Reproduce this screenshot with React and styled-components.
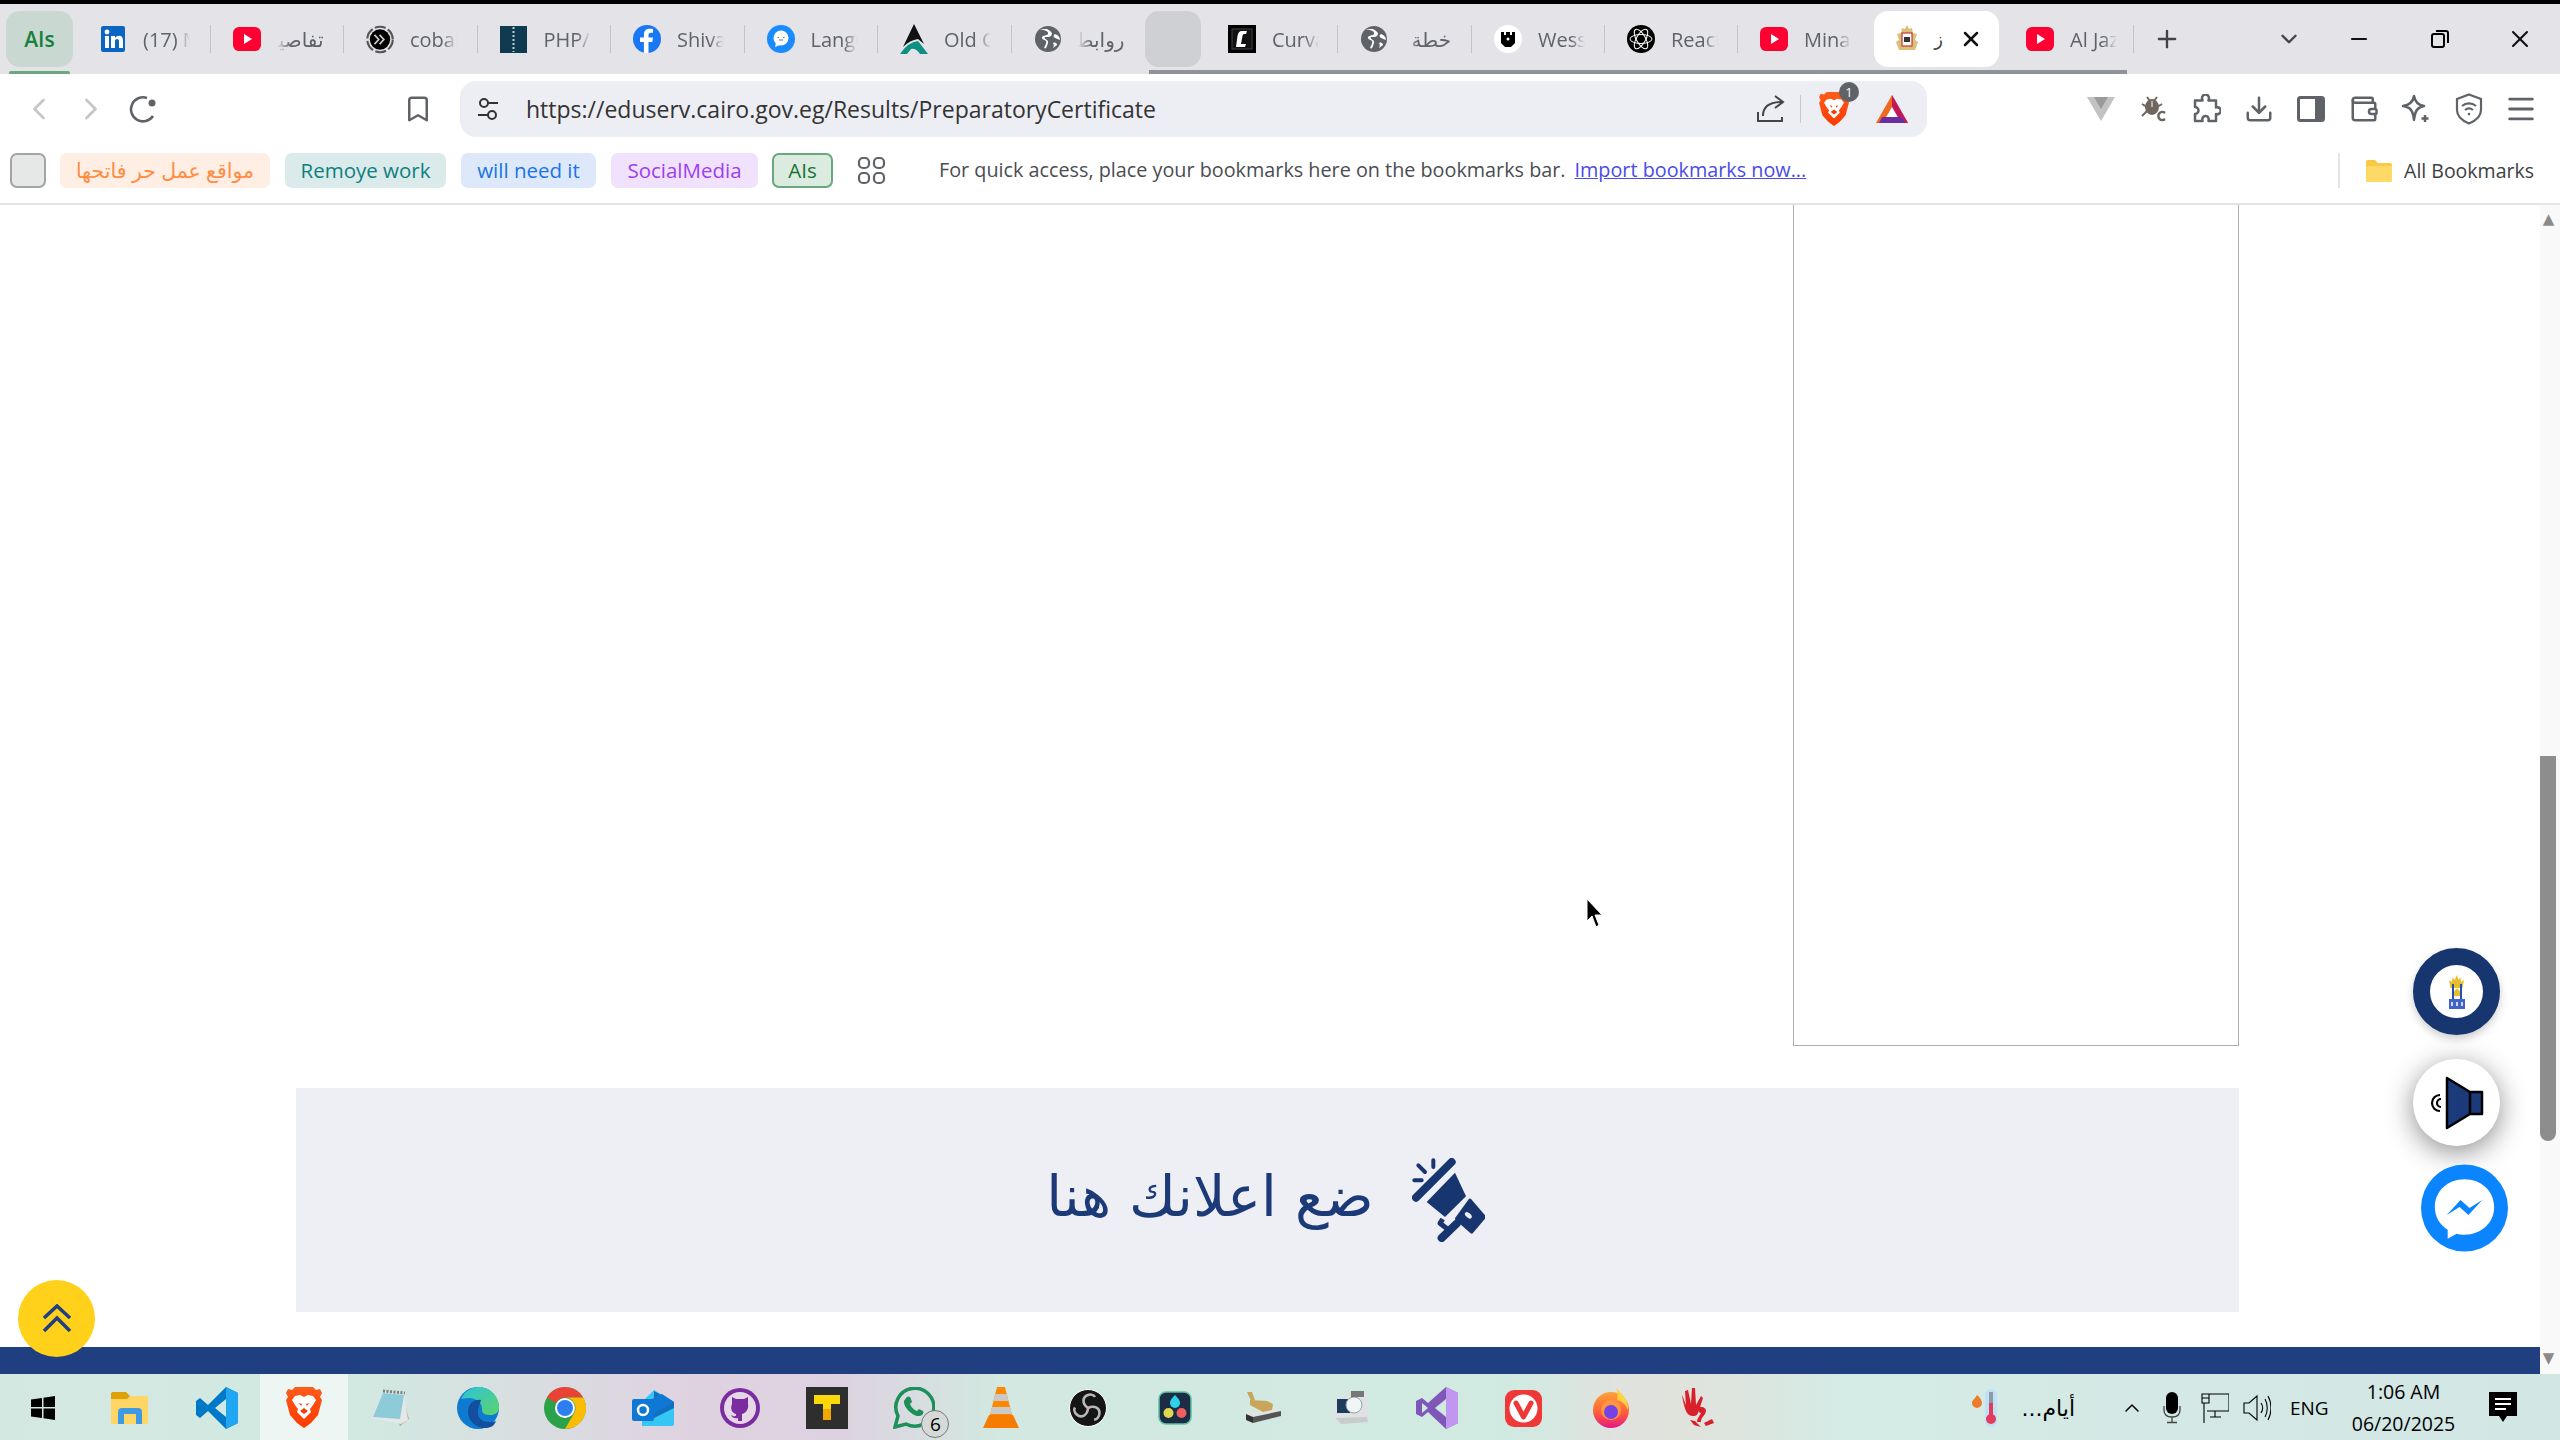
import React from 'react'
import styled, { createGlobalStyle } from 'styled-components'
import {
    ChevronLeft, ChevronRight, Bookmark, Download,
    Wallet, Plus, X, Minus, ChevronDown, ChevronUp, Menu
} from 'lucide-react'

const GlobalStyle = createGlobalStyle`
    html, body { margin: 0; padding: 0; background: #fff; }
    body { font-family: "Open Sans", "DejaVu Sans", sans-serif; }
`

// ---------- small drawn icons ----------

const YouTube = ({ size = 28 }) => (
    <svg width={size} height={size * 0.86} viewBox="0 0 28 24">
        <rect x="0" y="0" width="28" height="24" rx="6" fill="#ff0033" />
        <path d="M11 7 L19 12 L11 17 Z" fill="#fff" />
    </svg>
)

const LinkedIn = () => (
    <svg width="24" height="26" viewBox="0 0 24 26">
        <rect width="24" height="26" rx="2" fill="#0a66c2" />
        <circle cx="6" cy="6" r="2.4" fill="#fff" />
        <path d="M4 10h4v12H4zM10 10h4v2c1-1.5 2.5-2.3 4-2.3 3 0 4 2 4 5V22h-4v-6.5c0-1.500-.5-2.500-2-2.500s-2 1-2 2.500V22h-4z" fill="#fff" />
    </svg>
)

const Cobalt = () => (
    <svg width="33" height="33" viewBox="0 0 33 33">
        <circle cx="16.5" cy="16.5" r="15" fill="none" stroke="#555" strokeWidth="2.5" strokeDasharray="13 3" />
        <circle cx="16.5" cy="16.5" r="12" fill="#000" />
        <path d="M10 11l5 5.5-5 5.5M16 11l5 5.5-5 5.5" fill="none" stroke="#ccc" strokeWidth="2" />
    </svg>
)

const PhpIcon = () => (
    <svg width="27" height="27" viewBox="0 0 27 27">
        <rect width="27" height="27" fill="#0f3a50" />
        <path d="M13.5 1V26" stroke="#b8d0dc" strokeWidth="2" strokeDasharray="2 2" />
    </svg>
)

const Facebook = () => (
    <svg width="28" height="28" viewBox="0 0 28 28">
        <circle cx="14" cy="14" r="14" fill="#1877f2" />
        <path d="M15.5 28V17h3.800l.7-4.400h-4.500V10c0-1.300.6-2.300 2.400-2.300H20V4c-.7-.1-2-.3-3.400-.3-3.400 0-5.700 2.100-5.700 5.800v3.100H7V17h3.900v11z" fill="#fff" />
    </svg>
)

const Lang = () => (
    <svg width="28" height="28" viewBox="0 0 28 28">
        <circle cx="14" cy="14" r="14" fill="#1a8cff" />
        <circle cx="14" cy="13" r="7.5" fill="#fff" />
        <path d="M9 18l-1 4 5-2z" fill="#fff" />
        <path d="M10.5 12.5h1.500M16 12.5h1.500M12 15h4" stroke="#777" strokeWidth="1.2" />
    </svg>
)

const OldIcon = () => (
    <svg width="30" height="32" viewBox="0 0 28 30">
        <path d="M14 0 L24 20 L18 15 Q10 16 3 23Z" fill="#111" />
        <path d="M0 30 Q8 18 18 17 L28 30 L20 30 Q16 24 11 25 L7 30Z" fill="#0f8f83" />
    </svg>
)

const GlobeTab = () => (
    <svg width="26" height="26" viewBox="0 0 26 26">
        <circle cx="13" cy="13" r="13" fill="#5f6368" />
        <path d="M5 3c4 1 9 2 8 5-1 2-5 1-6 3s3 3 4 4-1 5-2 7c2 1 2 0 3-2 1-3 2-4 0-6-2-1-3-2-2-3 2 0 6 1 7-3 0-2-3-4-5-5z" fill="#fff" />
        <path d="M20 8c-2 1-2 3 0 4l5 2c0-3-2-5-5-6zM18 17c1 1 1 3 0 5l4-3c0-2-2-3-4-2z" fill="#fff" />
    </svg>
)

const Curva = () => (
    <svg width="28" height="28" viewBox="0 0 28 28">
        <rect width="28" height="28" fill="#000" />
        <rect x="4" y="4" width="20" height="20" fill="#111" stroke="#444" />
        <path d="M19 6h-5c-3 0-4 2-4.500 5L8 22h9l1-3h-5l1.500-8c.2-1 .5-2 1.500-2h2z" fill="#fff" />
    </svg>
)

const Wess = () => (
    <svg width="28" height="28" viewBox="0 0 28 28">
        <circle cx="14" cy="14" r="14" fill="#fff" />
        <path d="M7 7h3v3h2V7h4v3h2V7h3v11l-4 4h-6l-4-4z" fill="#000" />
        <circle cx="14" cy="14" r="1.5" fill="#fff" />
    </svg>
)

const ReactLogo = () => (
    <svg width="28" height="28" viewBox="0 0 28 28">
        <circle cx="14" cy="14" r="14" fill="#000" />
        <g fill="none" stroke="#fff" strokeWidth="1">
            <ellipse cx="14" cy="14" rx="11" ry="4.5" />
            <ellipse cx="14" cy="14" rx="11" ry="4.5" transform="rotate(60 14 14)" />
            <ellipse cx="14" cy="14" rx="11" ry="4.5" transform="rotate(120 14 14)" />
        </g>
    </svg>
)

const EagleSmall = () => (
    <svg width="22" height="30" viewBox="0 0 22 28">
        <path d="M11 0l2 4 3-1 1 5 4 1-2 6 3 2-3 8H3l-3-8 3-2-2-6 4-1 1-5 3 1z" fill="#dcc07a" />
        <rect x="6" y="8" width="10" height="13" fill="#fff" stroke="#c33" strokeWidth="1.2" />
        <rect x="8" y="12" width="6" height="5" fill="#333" />
    </svg>
)

const BraveLion = ({ w = 30, h = 34, id = 'brv' }) => (
    <svg width={w} height={h} viewBox="0 0 36 41">
        <defs>
            <linearGradient id={id} x1="0" y1="0" x2="0" y2="1">
                <stop offset="0" stopColor="#ff5c1a" />
                <stop offset="1" stopColor="#fb3a00" />
            </linearGradient>
        </defs>
        <path d="M9 0h18l3 3 4-1 2 4-2 4 2 3-4 15-7 8-7 5-7-5-7-8L0 13l2-3-2-4 2-4 4 1z" fill={`url(#${id})`} />
        <path d="M9 9l5-1 4 2 4-2 5 1 3 4-3 5-3 4 1 3-7 7-7-7 1-3-3-4-3-5z" fill="#fff" />
        <path d="M13 16l3 1-1 2zM23 16l-3 1 1 2zM18 21l-4 3 4 3 4-3z" fill="#fb3a00" />
    </svg>
)

const Aurora = () => (
    <svg width="32" height="28" viewBox="0 0 32 28">
        <path d="M16 0 L32 28 H0Z" fill="#ef6a1f" />
        <path d="M16 0 L32 28 H24 L16 12Z" fill="#c2185b" />
        <path d="M16 12 L23 24 H9Z" fill="#fff" />
        <path d="M6 22 H26 L29 28 H3Z" fill="#6a2ea0" />
    </svg>
)

const SiteControls = () => (
    <svg width="20" height="24" viewBox="0 0 20 24" fill="none" stroke="#333" strokeWidth="2">
        <circle cx="6" cy="6" r="4" />
        <path d="M10 6h10M0 18h10" />
        <circle cx="14" cy="18" r="4" />
    </svg>
)

const ShareArrow = () => (
    <svg width="28" height="28" viewBox="0 0 28 28" fill="none" stroke="#444" strokeWidth="2">
        <path d="M1 17v9h24v-4" />
        <path d="M6 21c0-9 6-14 19-14" />
        <path d="M18 1l8 6-8 6" />
    </svg>
)

const Reload = () => (
    <svg width="28" height="28" viewBox="0 0 28 28" fill="none">
        <path d="M24 21A12 12 0 1 1 18 3" stroke="#5f6368" strokeWidth="2.6" />
        <circle cx="23" cy="8" r="3.5" fill="#5f6368" />
    </svg>
)

const Vee = () => (
    <svg width="28" height="24" viewBox="0 0 28 24">
        <path d="M0 0H28L14 24Z" fill="#c2c2c2" />
        <path d="M7 0H21L14 12Z" fill="#9a9a9a" />
    </svg>
)

const Bug = () => (
    <svg width="26" height="26" viewBox="0 0 26 26" fill="none" stroke="#6f6660" strokeWidth="2">
        <ellipse cx="11" cy="11" rx="6" ry="7" fill="#6f6660" />
        <path d="M6 1l3 4M16 1l-3 4M1 8l5 3M21 8l-5 3M1 20l5-5" />
        <path d="M11 5v6" stroke="#fff" strokeWidth="1" />
        <path d="M24 17a4 4 0 1 0 0 6" strokeWidth="2.5" />
    </svg>
)

const PuzzleBlob = () => (
    <svg width="30" height="30" viewBox="0 0 30 30" fill="none" stroke="#5f6368" strokeWidth="2.5" strokeLinejoin="round">
        <path d="M11 4a3.500 3.500 0 0 1 7 0c0 1-.5 2-.5 2.500H25v7c1 0 2-.5 2.500 0a3.500 3.500 0 0 1 0 6.500c-.5.500-1.500 0-2.500 0v7h-7.500c0-1 .5-2 0-3a3.200 3.200 0 0 0-6 0c-.5 1 0 2 0 3H4v-7a3.500 3.500 0 0 0 0-7V6.500h7.500C11.500 6 11 5 11 4z" />
    </svg>
)

const SidePanel = () => (
    <svg width="28" height="26" viewBox="0 0 28 26">
        <rect x="1.5" y="1.5" width="25" height="23" rx="2" fill="none" stroke="#5f6368" strokeWidth="3" />
        <rect x="18" y="1" width="9" height="24" fill="#5f6368" />
    </svg>
)

const Sparkle = () => (
    <svg width="30" height="30" viewBox="0 0 30 30" fill="none" stroke="#5f6368" strokeWidth="2.5">
        <path d="M13 2c1 6 4 9 10 10-6 1-9 4-10 14-1-10-4-13-11-14 7-1 10-4 11-10z" strokeLinejoin="round" />
        <path d="M24 21v7M20.5 24.5h7" />
    </svg>
)

const ShieldWifi = () => (
    <svg width="28" height="32" viewBox="0 0 28 32" fill="none" stroke="#5f6368" strokeWidth="2.2">
        <path d="M14 1.500 L26 6 V17c0 7-6 11-12 13.500C8 28 2 24 2 17V6Z" />
        <path d="M7 13c4-3.500 10-3.500 14 0M10 17c2.500-2 5.500-2 8 0" />
        <circle cx="14" cy="21" r="1.3" fill="#5f6368" stroke="none" />
    </svg>
)

const AppsGrid = () => (
    <svg width="29" height="29" viewBox="0 0 29 29" fill="none" stroke="#5f6368" strokeWidth="2.2">
        <rect x="2" y="2" width="10" height="10" rx="4" />
        <rect x="17" y="2" width="10" height="10" rx="4" />
        <rect x="2" y="17" width="10" height="10" rx="4" />
        <rect x="17" y="17" width="10" height="10" rx="4" />
    </svg>
)

const FolderIcon = () => (
    <svg width="28" height="24" viewBox="0 0 28 24">
        <path d="M1 3a2 2 0 0 1 2-2h7l3 3h12a2 2 0 0 1 2 2v15a2 2 0 0 1-2 2H3a2 2 0 0 1-2-2z" fill="#f9c943" />
        <path d="M1 7h26v14a2 2 0 0 1-2 2H3a2 2 0 0 1-2-2z" fill="#ffd966" />
    </svg>
)

const Megaphone = () => (
    <svg width="73" height="84" viewBox="0 0 219 252" fill="#17356f">
        <path d="M12 119 L119 12" stroke="#17356f" strokeWidth="24" strokeLinecap="round" />
        <path d="M129 44 L162 115 L99 177 L44 132Z" />
        <path d="M174 127 L217 177 L179 222 L134 182Z" stroke="#17356f" strokeWidth="10" strokeLinejoin="round" />
        <ellipse cx="169" cy="172" rx="12" ry="7" transform="rotate(40 169 172)" fill="#edeff5" />
        <path d="M89 240 L134 197" stroke="#17356f" strokeWidth="24" strokeLinecap="round" />
        <path d="M92 183 L84 196 L110 216" fill="none" stroke="#17356f" strokeWidth="15" strokeLinejoin="round" />
        <path d="M19 22 L39 42 M64 7 L64 27 M7 67 L29 67" stroke="#17356f" strokeWidth="12" strokeLinecap="round" />
    </svg>
)

const Mosque = () => (
    <svg width="16" height="34" viewBox="0 0 16 34">
        <path d="M8 0l1.500 5 2-3 .5 5 3-2-1.500 8H1.500L0 5l3 2 .5-5 2 3z" fill="#e6bd2b" />
        <path d="M3 9h2v16H3zM11 9h2v16h-2z" fill="#2a4db0" />
        <path d="M5 17c1-4 5-4 6 0v4H5z" fill="#e6bd2b" />
        <rect x="0" y="24" width="16" height="10" fill="#3f63c9" />
        <path d="M3 27v4M8 27v4M13 27v4" stroke="#fff" strokeWidth="1.5" />
    </svg>
)

const Speaker = () => (
    <svg width="54" height="54" viewBox="0 0 54 54">
        <path d="M17 2 L40 16 H52 V38 H40 L17 52Z" fill="#1b3a7a" stroke="#000" strokeWidth="2.5" strokeLinejoin="round" />
        <path d="M40 16V38" stroke="#000" strokeWidth="2.5" />
        <path d="M10 19a8 8 0 0 0 0 16M11 23a4 4 0 0 0 0 8" fill="none" stroke="#000" strokeWidth="2.2" />
    </svg>
)

const Messenger = () => (
    <svg width="88" height="88" viewBox="0 0 88 88">
        <circle cx="44" cy="44" r="44" fill="#0a84ff" />
        <path d="M44 15c17 0 30 12 30 28S61 71 44 71c-3 0-6-.4-8-1l-9 5v-9C19 61 14 53 14 43c0-16 13-28 30-28z" fill="#fff" />
        <path d="M26 51l14-15 9 8 13-8-14 15-9-8z" fill="#0a84ff" />
    </svg>
)

const DoubleUp = () => (
    <svg width="30" height="30" viewBox="0 0 30 30" fill="none" stroke="#1f3f80" strokeWidth="3.5">
        <path d="M2 14 L15 2 L28 14 M2 27 L15 14 L28 27" />
    </svg>
)

const Cursor = () => (
    <svg width="17" height="30" viewBox="0 0 17 30">
        <path d="M1 1 L1 23 L6 18 L10 29 L13 27 L9 17 L16 17Z" fill="#000" stroke="#fff" strokeWidth="1" />
    </svg>
)

// ---------- taskbar icons ----------

const WinLogo = () => (
    <svg width="24" height="24" viewBox="0 0 24 24">
        <path d="M0 3.500 L11 2 V11 H0Z M12.500 1.800 L24 0 V11 H12.500Z M0 12.500 H11 V22 L0 20.500Z M12.500 12.500 H24 V24 L12.500 22.300Z" fill="#000" />
    </svg>
)

const Explorer = () => (
    <svg width="38" height="32" viewBox="0 0 38 32">
        <rect x="0" y="4" width="37" height="28" rx="2" fill="#ffd566" />
        <path d="M0 2a2 2 0 0 1 2-2h13l4 4-3 3H0z" fill="#e0a106" />
        <path d="M7 32V20a4 4 0 0 1 4-4h16a4 4 0 0 1 4 4v12h-6V22H13v10z" fill="#3f9ae4" />
    </svg>
)

const VSCode = () => (
    <svg width="42" height="42" viewBox="0 0 42 42">
        <path d="M30 0 L42 6 V36 L30 42 L12 24 L4 31 L0 28 V14 L4 11 L12 18Z" fill="#0078c8" />
        <path d="M30 0 L42 6 V36 L30 42Z" fill="#1fa7f2" />
        <path d="M30 12 V30 L19 21Z" fill="#d3e8e2" />
    </svg>
)

const Notepad = () => (
    <svg width="40" height="38" viewBox="0 0 40 38">
        <path d="M31 4 L38 30 L29 37 L26 30Z" fill="#b9a983" />
        <path d="M12 3 L33 5 L37 31 L30 35 L1 29Z" fill="#e4e8ea" />
        <path d="M12 4 L33 6 L29 30 L2 28Z" fill="#8ecbd8" />
        <path d="M12 2 L34 4" stroke="#7d7d7d" strokeWidth="3" strokeDasharray="2 1.500" />
    </svg>
)

const Edge = () => (
    <svg width="42" height="42" viewBox="0 0 42 42">
        <defs>
            <linearGradient id="edg" x1="0" y1="0" x2="1" y2="1">
                <stop offset="0" stopColor="#2bc4dc" />
                <stop offset="1" stopColor="#5ed36a" />
            </linearGradient>
        </defs>
        <circle cx="21" cy="21" r="21" fill="#0f7bd0" />
        <path d="M4 12C8 3 16 0 22 0c12 0 20 10 20 20 0 6-4 8-9 8-7 0-8-3-8-6 0-7-7-11-13-11-4 0-7 1-8 1z" fill="url(#edg)" />
        <path d="M24 13c-7-1-13 4-13 12 0 8 7 16 17 16 6 0 9-2 11-7-5 2-17 2-18-7-.5-6 2-10 3-14z" fill="#124f9e" />
    </svg>
)

const Chrome = () => (
    <svg width="42" height="42" viewBox="0 0 42 42">
        <circle cx="21" cy="21" r="21" fill="#2ba14a" />
        <path d="M21 0a21 21 0 0 1 18.200 10.500H21a10.500 10.500 0 0 0-9.100 5.250L2.800 10.500A21 21 0 0 1 21 0z" fill="#ea4335" />
        <path d="M39.200 10.500A21 21 0 0 1 21 42l9.100-15.750A10.500 10.500 0 0 0 21 10.500z" fill="#fbbc04" />
        <circle cx="21" cy="21" r="10" fill="#fff" />
        <circle cx="21" cy="21" r="8" fill="#2d7ff0" />
    </svg>
)

const Outlook = () => (
    <svg width="42" height="36" viewBox="0 0 42 36">
        <path d="M22 0 L42 12 V34 a2 2 0 0 1-2 2 H10 V12Z" fill="#35c6f4" />
        <path d="M22 1 L42 12 V18 L22 28 V1Z" fill="#0a5fb4" opacity=".85" />
        <path d="M10 14 L30 4 L42 12 L22 24Z" fill="#0f78d4" />
        <rect x="0" y="9" width="22" height="22" rx="2" fill="#0f78d4" />
        <circle cx="11" cy="20" r="5" fill="none" stroke="#fff" strokeWidth="2.5" />
    </svg>
)

const GithubIcon = () => (
    <svg width="40" height="40" viewBox="0 0 40 40">
        <circle cx="20" cy="20" r="20" fill="#7b2da0" />
        <circle cx="20" cy="20" r="16" fill="#e7d8e8" />
        <path d="M12 9l4 2h8l4-2v7c1 5-2 9-6 10v7h-4v-3c-4 1-6-1-7-3 2 1 4 2 5 .5v-1.500C12 25 10 21 12 16z" fill="#7b2da0" />
    </svg>
)

const TApp = () => (
    <svg width="42" height="42" viewBox="0 0 42 42">
        <rect width="42" height="42" fill="#2e2e2e" />
        <path d="M8 8H34V17H25V33H17V17H8Z" fill="#fdd808" />
        <path d="M17 22H25V33H17Z" fill="#f1a800" />
    </svg>
)

const WhatsApp = () => (
    <svg width="42" height="42" viewBox="0 0 42 42">
        <path d="M2 40l3-11A19 19 0 1 1 13 37z" fill="none" stroke="#1c8f5a" strokeWidth="3.5" />
        <path d="M13 11c2-2 4-2 5 1l1 3-2 2c1 3 4 6 7 7l2-2 4 2c1 2 0 4-3 5-7 1-17-9-16-15z" fill="#1c8f5a" />
    </svg>
)

const Vlc = () => (
    <svg width="36" height="42" viewBox="0 0 36 42">
        <path d="M14 0h8l8 32H6z" fill="#ff8800" />
        <path d="M12.500 7h11l2 7h-15zM9 20h18l2 7H7z" fill="#c9c9c9" />
        <path d="M0 41l6-13h24l6 13z" fill="#f57c00" />
    </svg>
)

const Obs = () => (
    <svg width="38" height="38" viewBox="0 0 38 38">
        <circle cx="19" cy="19" r="18.5" fill="#151515" stroke="#fff" strokeWidth="1" />
        <g fill="none" stroke="#b8b8b8" strokeWidth="2.6">
            <path d="M19 19C13 15 13 8 19 6c3-1 6 0 7 2" />
            <path d="M19 19C13 15 13 8 19 6c3-1 6 0 7 2" transform="rotate(120 19 19)" />
            <path d="M19 19C13 15 13 8 19 6c3-1 6 0 7 2" transform="rotate(240 19 19)" />
        </g>
    </svg>
)

const Davinci = () => (
    <svg width="34" height="34" viewBox="0 0 34 34">
        <rect x="1" y="1" width="32" height="32" rx="7" fill="#1c2c44" stroke="#5cc1a0" strokeWidth="1.5" />
        <path d="M17 4c4 4 5 6 5 8a5 5 0 0 1-10 0c0-2 1-4 5-8z" fill="#30d0e8" />
        <circle cx="10.5" cy="22" r="5" fill="#ddd84c" />
        <circle cx="23.5" cy="22" r="5" fill="#f05f5f" />
    </svg>
)

const Pkg = () => (
    <svg width="36" height="32" viewBox="0 0 36 32">
        <path d="M1 21 L28 15 L36 19 V24 L8 31 L1 28Z" fill="#e2e4e4" />
        <path d="M1 22 L8 25 V31 L1 28Z" fill="#333" />
        <path d="M8 25 L36 19 V24 L8 31Z" fill="#555" />
        <path d="M5 8 L22 9 L28 12 L27 18 L18 20 L5 13Z" fill="#c9a55c" />
        <path d="M2 0h5l3 8-4 1z" fill="#c9a55c" />
    </svg>
)

const DvdTool = () => (
    <svg width="38" height="34" viewBox="0 0 38 34">
        <path d="M3 8 L22 1 L36 3 L38 30 L10 33 L1 27Z" fill="#dfe2e2" />
        <rect x="6" y="8" width="13" height="14" fill="#1c3c5c" />
        <circle cx="23" cy="14" r="8" fill="#f2f5f5" stroke="#90a0ac" />
        <rect x="20" y="0" width="13" height="6" fill="#777" />
        <path d="M5 27 L36 26 L37 31 L10 33Z" fill="#c8cccc" />
    </svg>
)

const VsIcon = () => (
    <svg width="42" height="42" viewBox="0 0 42 42">
        <path d="M30 0 L42 6 V36 L30 42 L12 25 L6 30 L0 27 V14 L6 11 L12 16Z" fill="#7e57b8" />
        <path d="M30 0 L42 6 V36 L30 42Z" fill="#c196f0" />
        <path d="M30 12 V30 L19 21Z" fill="#d2e9e2" />
        <path d="M6 16 L12 21 L6 26Z" fill="#d2e9e2" />
    </svg>
)

const Vivaldi = () => (
    <svg width="37" height="37" viewBox="0 0 37 37">
        <rect width="37" height="37" rx="9" fill="#ef3939" />
        <circle cx="18.5" cy="18.5" r="14" fill="#fff" />
        <path d="M11 13 L18.5 27 L26 13" fill="none" stroke="#ef3939" strokeWidth="5" strokeLinecap="round" strokeLinejoin="round" />
    </svg>
)

const Firefox = () => (
    <svg width="38" height="40" viewBox="0 0 38 40">
        <defs>
            <linearGradient id="ffx" x1="0.5" y1="0" x2="0.5" y2="1">
                <stop offset="0" stopColor="#ffa436" />
                <stop offset="0.6" stopColor="#ff5a3c" />
                <stop offset="1" stopColor="#e31587" />
            </linearGradient>
        </defs>
        <circle cx="19" cy="22" r="18" fill="url(#ffx)" />
        <path d="M24 0c5 5 13 12 12 22-3-7-7-9-11-10 1-4 1-8-1-12z" fill="#ffd23f" />
        <circle cx="19" cy="22" r="10" fill="#ff9640" />
        <circle cx="19" cy="24" r="7" fill="#7542e5" />
    </svg>
)

const RedHand = () => (
    <svg width="36" height="42" viewBox="0 0 36 42" fill="#d8202a">
        <path d="M2 8l4 10-1-14 3-1 3 14 1-16 3 0 1 17 5-9 2 2-4 12c-1 5-3 6-6 6-6 0-8-5-11-20z" />
        <path d="M18 20c6-1 10 2 7 7-2 3-4 4-4 8h-4c0-4 3-6 4-9-2 0-3-2-3-6zM10 33l5 1 6 6-7-2zM24 36l8-4 2 4-8 3z" />
    </svg>
)

const Thermo = () => (
    <svg width="28" height="38" viewBox="0 0 28 38">
        <rect x="13" y="0" width="12" height="38" rx="6" fill="#bfe0f5" />
        <rect x="17" y="3" width="4" height="22" fill="#8b9aa5" />
        <rect x="17" y="14" width="4" height="14" fill="#e33b5e" />
        <circle cx="19" cy="30" r="5" fill="#e33b5e" />
        <path d="M5 6c3 3 5 5 5 8a5 5 0 0 1-10 0c0-3 3-4 5-8z" fill="#ee7b2c" />
    </svg>
)

const TrayMic = () => (
    <svg width="18" height="32" viewBox="0 0 18 32">
        <rect x="3" y="0" width="12" height="22" rx="6" fill="#000" />
        <path d="M1 14v4c0 5 3 7 8 7s8-2 8-7v-4M9 25v5M4 30.500h10" fill="none" stroke="#444" strokeWidth="1.3" />
    </svg>
)

const TraySpeaker = () => (
    <svg width="28" height="30" viewBox="0 0 28 30" fill="none" stroke="#000" strokeWidth="1.1">
        <path d="M1 10h5l8-7v24l-8-7H1z" />
        <path d="M18 10c2 3 2 7 0 10M22 6c3 5 3 13 0 18M25 3c4 7 4 17 0 24" />
    </svg>
)

const Network = () => (
    <svg width="28" height="30" viewBox="0 0 28 30" fill="none" stroke="#000" strokeWidth="1.1">
        <path d="M6 1h22v17H6M14 18v6M9 24h11M3 1h5v9H1V1zM3 10v20M1 5h7" />
    </svg>
)

const Notification = () => (
    <svg width="28" height="32" viewBox="0 0 28 32">
        <path d="M0 0H28V24H18L14 30L10 24H0Z" fill="#000" />
        <path d="M6 7H22M6 12H22M6 17H17" stroke="#fff" strokeWidth="1.8" />
    </svg>
)

const Restore = () => (
    <svg width="18" height="18" viewBox="0 0 18 18" fill="none" stroke="#000" strokeWidth="2">
        <rect x="1" y="4" width="12" height="13" rx="2" />
        <path d="M5 1h10a2 2 0 0 1 2 2v10" />
    </svg>
)

// ---------- layout ----------

const Screen = styled.div`
    width: 2560px;
    height: 1440px;
    display: flex;
    flex-direction: column;
    overflow: hidden;
    background: #fff;
    position: relative;
`

const TabStrip = styled.div`
    height: 63px;
    padding: 7px 0 0 6px;
    border-top: 4px solid #000;
    background: #e3e3e8;
    display: flex;
    align-items: flex-start;
    position: relative;
`

const GroupTab = styled.div`
    width: 67px;
    height: 56px;
    margin-right: 4px;
    border-radius: 14px;
    background: #c9d9d2;
    color: #16803c;
    font-size: 21px;
    font-weight: 600;
    display: flex;
    align-items: center;
    justify-content: center;
    position: relative;
    &::after {
        content: '';
        position: absolute;
        left: 3px;
        right: 3px;
        bottom: -7px;
        height: 3px;
        background: #6aa97f;
        border-radius: 2px 2px 0 0;
    }
`

const Tab = styled.div`
    width: ${p => p.$w || 133.5}px;
    height: 56px;
    box-sizing: border-box;
    padding-left: 22px;
    display: flex;
    align-items: center;
    gap: 16px;
    flex-shrink: 0;
    position: relative;
    &::after {
        content: '';
        display: ${p => (p.$last ? 'none' : 'block')};
        position: absolute;
        right: 0;
        top: 14px;
        height: 28px;
        width: 1px;
        background: #c3c3c8;
    }
`

const TabIcon = styled.span`
    width: 28px;
    display: flex;
    align-items: center;
    justify-content: center;
    flex-shrink: 0;
`

const TabTitle = styled.span`
    width: 47px;
    overflow: hidden;
    white-space: nowrap;
    font-size: 20px;
    color: #5f6368;
    direction: ${p => (p.$rtl ? 'rtl' : 'ltr')};
    mask-image: ${p => (p.$rtl
        ? 'linear-gradient(to left, #000 70%, transparent)'
        : 'linear-gradient(to right, #000 70%, transparent)')};
`

const TabGroup = styled.div`
    display: flex;
    align-items: flex-start;
    position: relative;
    &::after {
        content: '';
        position: absolute;
        left: 4px;
        right: 7px;
        bottom: -7px;
        height: 4px;
        background: #8f9297;
    }
`

const CollapsedGroup = styled.div`
    width: 56px;
    height: 56px;
    margin-right: 5px;
    border-radius: 14px;
    background: #cfd0d4;
`

const ActiveTab = styled.div`
    width: 125px;
    height: 56px;
    margin: 0 5px 0 4px;
    box-sizing: border-box;
    padding-left: 22px;
    border-radius: 14px;
    background: #fff;
    display: flex;
    align-items: center;
    font-size: 18px;
    color: #444;
`

const ActiveTitle = styled.span`
    width: 41px;
    text-align: center;
`

const NewTab = styled.div`
    width: 66px;
    height: 56px;
    display: flex;
    align-items: center;
    justify-content: center;
`

const WindowButtons = styled.div`
    display: flex;
    margin-left: auto;
    height: 56px;
`

const WindowButton = styled.div`
    width: ${p => p.$w || 80}px;
    display: flex;
    align-items: center;
    justify-content: center;
`

const Toolbar = styled.div`
    height: 56px;
    padding-top: 7px;
    display: flex;
    align-items: flex-start;
    background: #fff;
`

const NavGroup = styled.div`
    width: 460px;
    box-sizing: border-box;
    padding-left: 13px;
    height: 56px;
    display: flex;
    align-items: center;
`

const NavButton = styled.div`
    width: ${p => p.$w || 52}px;
    margin-left: ${p => p.$ml || 0}px;
    display: flex;
    align-items: center;
    justify-content: center;
`

const AddressBar = styled.div`
    width: 1467px;
    height: 56px;
    box-sizing: border-box;
    padding: 0 19px 0 18px;
    background: #edeef3;
    border-radius: 16px;
    display: flex;
    align-items: center;
`

const Url = styled.div`
    margin-left: 28px;
    font-size: 23px;
    color: #333;
    white-space: nowrap;
    flex: 1;
`

const AddressDivider = styled.div`
    width: 1px;
    height: 28px;
    margin: 0 18px 0 15px;
    background: #c7c8cc;
`

const ShieldSlot = styled.div`
    width: 30px;
    height: 34px;
    margin-right: 27px;
    position: relative;
`

const Badge = styled.span`
    position: absolute;
    top: -10px;
    right: -10px;
    width: 20px;
    height: 20px;
    border-radius: 50%;
    background: #5f6368;
    color: #fff;
    font-size: 13px;
    display: flex;
    align-items: center;
    justify-content: center;
`

const Actions = styled.div`
    margin-left: 148px;
    height: 56px;
    display: flex;
    align-items: center;
`

const ActionSlot = styled.div`
    width: 52.5px;
    display: flex;
    justify-content: center;
    align-items: center;
`

const BookmarksBar = styled.div`
    height: 50px;
    padding: 16px 0 0 10px;
    border-bottom: 2px solid #e3e3e8;
    background: #fff;
    display: flex;
    align-items: flex-start;
`

const EmptyFolder = styled.div`
    width: 36px;
    height: 35px;
    box-sizing: border-box;
    border: 2px solid #a2a4a6;
    border-radius: 7px;
    background: #e6e8e8;
    margin-right: 14px;
`

const Chip = styled.div`
    height: 35px;
    width: ${p => p.$w}px;
    margin-right: ${p => p.$mr || 15}px;
    padding-bottom: 2px;
    box-sizing: border-box;
    border-radius: 7px;
    background: ${p => p.$bg};
    color: ${p => p.$fg};
    border: ${p => (p.$border ? `2px solid ${p.$border}` : 'none')};
    font-size: 20.5px;
    font-weight: 500;
    display: flex;
    align-items: center;
    justify-content: center;
    white-space: nowrap;
`

const AppsSlot = styled.div`
    width: 29px;
    height: 35px;
    margin: 0 53px 0 10px;
    display: flex;
    align-items: center;
`

const Hint = styled.div`
    height: 33px;
    font-size: 19.8px;
    color: #4a4d52;
    display: flex;
    align-items: center;
    white-space: nowrap;
`

const ImportLink = styled.a`
    margin-left: 9px;
    color: #4b4be6;
    text-decoration: underline;
`

const AllBookmarks = styled.div`
    margin-left: auto;
    margin-right: 26px;
    height: 35px;
    display: flex;
    align-items: center;
    gap: 11px;
    font-size: 19.5px;
    color: #3c4043;
    border-left: 2px solid #e3e3e8;
    padding-left: 25px;
`

const PageArea = styled.div`
    flex: 1;
    display: flex;
    min-height: 0;
`

const Main = styled.div`
    width: 2540px;
    height: 1169px;
    display: flex;
    flex-direction: column;
    position: relative;
`

const Content = styled.div`
    flex: 1;
    padding: 0 301px 0 296px;
    display: flex;
    flex-direction: column;
`

const SideBox = styled.div`
    align-self: flex-end;
    width: 446px;
    height: 841px;
    box-sizing: border-box;
    border: 1px solid #adadad;
    border-top: none;
`

const AdBanner = styled.div`
    margin-top: 42px;
    height: 224px;
    background: #edeff5;
    display: flex;
    align-items: center;
    justify-content: center;
    gap: 38px;
    padding-right: 4px;
`

const AdText = styled.span`
    font-family: "DejaVu Sans", sans-serif;
    font-size: 57px;
    color: #1d3a78;
    direction: rtl;
    margin-bottom: 8px;
`

const FooterBar = styled.div`
    height: 27px;
    background: #1f3f80;
`

const ToTop = styled.div`
    position: absolute;
    left: 18px;
    top: 1075px;
    width: 77px;
    height: 77px;
    border-radius: 50%;
    background: #ffd11a;
    display: flex;
    align-items: center;
    justify-content: center;
`

const FloatButton = styled.div`
    position: absolute;
    left: ${p => p.$left}px;
    top: ${p => p.$top}px;
    width: 87px;
    height: 87px;
    box-sizing: border-box;
    border-radius: 50%;
    background: #fff;
    display: flex;
    align-items: center;
    justify-content: center;
    border: ${p => (p.$ring ? '17px solid #17356f' : 'none')};
    box-shadow: ${p => p.$shadow};
`

const CursorMark = styled.div`
    position: absolute;
    left: 1586px;
    top: 693px;
    line-height: 0;
`

const ScrollTrack = styled.div`
    width: 20px;
    height: 1169px;
    background: #f9f9f9;
    display: flex;
    flex-direction: column;
    align-items: flex-start;
`

const Arrow = styled.div`
    width: 17px;
    margin-top: ${p => p.$mt}px;
    display: flex;
    justify-content: center;
    color: #8a8a8a;
    font-size: 15px;
    line-height: 1;
    &::before { content: '${p => (p.$down ? '▼' : '▲')}'; font-family: "DejaVu Sans", sans-serif; }
`

const Thumb = styled.div`
    width: 16px;
    height: 385px;
    margin-top: 529px;
    background: #8d8d8d;
    border-radius: 0 0 8px 8px;
`

const Taskbar = styled.div`
    height: 66px;
    box-sizing: border-box;
    padding-top: 2px;
    display: flex;
    align-items: stretch;
    background: linear-gradient(90deg, #d3e8e0 0%, #d1e9e1 14%, #d8dfe0 20%, #dfd2e0 27%, #ddd3e0 33%, #d2e8e0 39%, #d0eae2 59%, #dfe2de 63%, #e0e2dc 66%, #d5ebe5 72%, #d2e6e4 100%);
`

const Pinned = styled.div`
    display: flex;
    margin-left: -1px;
`

const Pin = styled.div`
    width: 87.15px;
    margin-top: ${p => (p.$active ? '-2px' : '0')};
    position: relative;
    display: flex;
    align-items: center;
    justify-content: center;
    background: ${p => (p.$active ? 'rgba(255,255,255,.6)' : 'transparent')};
`

const PinBadge = styled.span`
    position: absolute;
    left: 51px;
    top: 34px;
    width: 28px;
    height: 28px;
    border-radius: 50%;
    background: #d5dad8;
    border: 1px solid #777;
    box-sizing: border-box;
    font-size: 19px;
    color: #000;
    display: flex;
    align-items: center;
    justify-content: center;
`

const Tray = styled.div`
    margin-left: auto;
    display: flex;
    align-items: center;
    color: #000;
`

const Weather = styled.span`
    margin-left: 21px;
    width: 54px;
    font-family: "DejaVu Sans", sans-serif;
    font-size: 22px;
    direction: rtl;
    white-space: nowrap;
`

const TraySlot = styled.div`
    width: ${p => p.$w}px;
    margin-left: ${p => p.$ml || 0}px;
    display: flex;
    align-items: center;
    justify-content: center;
`

const TrayText = styled.div`
    margin-left: 19px;
    width: 40px;
    font-size: 19px;
`

const Clock = styled.div`
    margin-left: 21px;
    width: 105px;
    text-align: center;
    font-size: 19.5px;
    line-height: 32px;
`

const tabs = [
    { icon: <LinkedIn />, title: '(17) Messaging' },
    { icon: <YouTube />, title: 'تفاصيل', rtl: true },
    { icon: <Cobalt />, title: 'cobalt' },
    { icon: <PhpIcon />, title: 'PHP/ MySQL' },
    { icon: <Facebook />, title: 'Shiva' },
    { icon: <Lang />, title: 'LangChain' },
    { icon: <OldIcon />, title: 'Old Cairo' },
    { icon: <GlobeTab />, title: 'روابط', rtl: true, last: true },
]

const groupedTabs = [
    { icon: <Curva />, title: 'Curva', w: 132 },
    { icon: <GlobeTab />, title: 'خطة', rtl: true, w: 134 },
    { icon: <Wess />, title: 'Wess', w: 133 },
    { icon: <ReactLogo />, title: 'React', w: 133 },
    { icon: <YouTube />, title: 'Mina', w: 132, last: true },
]

const bookmarks = [
    { label: 'مواقع عمل حر فاتحها', w: 210, bg: '#ffeee3', fg: '#ff8c42' },
    { label: 'Remoye work', w: 161, bg: '#dbebec', fg: '#0e7f7f' },
    { label: 'will need it', w: 135, bg: '#dde9fb', fg: '#1a73e8' },
    { label: 'SocialMedia', w: 147, bg: '#f0e2fc', fg: '#9c3fef', mr: 14 },
    { label: 'AIs', w: 61, bg: '#dcebe0', fg: '#137333', border: '#67a97c', mr: 14 },
]

const pins = [
    <WinLogo />, <Explorer />, <VSCode />, <BraveLion w={36} h={41} id="brv2" />, <Notepad />, <Edge />, <Chrome />,
    <Outlook />, <GithubIcon />, <TApp />, <WhatsApp />, <Vlc />, <Obs />, <Davinci />, <Pkg />, <DvdTool />,
    <VsIcon />, <Vivaldi />, <Firefox />, <RedHand />,
]

const stroke = { color: '#5f6368', strokeWidth: 2 }

export default function App() {
    return (
        <Screen>
            <GlobalStyle />
            <TabStrip>
                <GroupTab>AIs</GroupTab>
                {tabs.map((t, i) => (
                    <Tab key={i} $last={t.last}>
                        <TabIcon>{t.icon}</TabIcon>
                        <TabTitle $rtl={t.rtl}>{t.title}</TabTitle>
                    </Tab>
                ))}
                <TabGroup>
                    <CollapsedGroup />
                    {groupedTabs.map((t, i) => (
                        <Tab key={i} $w={t.w} $last={t.last}>
                            <TabIcon>{t.icon}</TabIcon>
                            <TabTitle $rtl={t.rtl}>{t.title}</TabTitle>
                        </Tab>
                    ))}
                    <ActiveTab>
                        <EagleSmall />
                        <ActiveTitle>ز</ActiveTitle>
                        <X size={24} color="#111" strokeWidth={2.5} />
                    </ActiveTab>
                    <Tab $w={130}>
                        <TabIcon><YouTube /></TabIcon>
                        <TabTitle>Al Jazeera</TabTitle>
                    </Tab>
                </TabGroup>
                <NewTab><Plus size={28} color="#444" strokeWidth={2} /></NewTab>
                <WindowButtons>
                    <WindowButton $w={58}><ChevronDown size={26} color="#444" strokeWidth={2.2} /></WindowButton>
                    <WindowButton $w={82}><Minus size={24} color="#111" strokeWidth={2.2} /></WindowButton>
                    <WindowButton $w={80}><Restore /></WindowButton>
                    <WindowButton $w={80}><X size={28} color="#111" strokeWidth={1.8} /></WindowButton>
                </WindowButtons>
            </TabStrip>

            <Toolbar>
                <NavGroup>
                    <NavButton><ChevronLeft size={36} color="#c4c6c9" strokeWidth={1.8} /></NavButton>
                    <NavButton><ChevronRight size={36} color="#c4c6c9" strokeWidth={1.8} /></NavButton>
                    <NavButton><Reload /></NavButton>
                    <NavButton $ml={223}><Bookmark size={30} {...stroke} /></NavButton>
                </NavGroup>
                <AddressBar>
                    <SiteControls />
                    <Url>https://eduserv.cairo.gov.eg/Results/PreparatoryCertificate</Url>
                    <ShareArrow />
                    <AddressDivider />
                    <ShieldSlot>
                        <BraveLion />
                        <Badge>1</Badge>
                    </ShieldSlot>
                    <Aurora />
                </AddressBar>
                <Actions>
                    <ActionSlot><Vee /></ActionSlot>
                    <ActionSlot><Bug /></ActionSlot>
                    <ActionSlot><PuzzleBlob /></ActionSlot>
                    <ActionSlot><Download size={30} {...stroke} /></ActionSlot>
                    <ActionSlot><SidePanel /></ActionSlot>
                    <ActionSlot><Wallet size={30} {...stroke} /></ActionSlot>
                    <ActionSlot><Sparkle /></ActionSlot>
                    <ActionSlot><ShieldWifi /></ActionSlot>
                    <ActionSlot><Menu size={34} {...stroke} /></ActionSlot>
                </Actions>
            </Toolbar>

            <BookmarksBar>
                <EmptyFolder />
                {bookmarks.map(b => (
                    <Chip key={b.label} $w={b.w} $bg={b.bg} $fg={b.fg} $border={b.border} $mr={b.mr}>{b.label}</Chip>
                ))}
                <AppsSlot><AppsGrid /></AppsSlot>
                <Hint>
                    For quick access, place your bookmarks here on the bookmarks bar.
                    <ImportLink>Import bookmarks now...</ImportLink>
                </Hint>
                <AllBookmarks>
                    <FolderIcon />
                    All Bookmarks
                </AllBookmarks>
            </BookmarksBar>

            <PageArea>
                <Main>
                    <Content>
                        <SideBox />
                        <AdBanner>
                            <AdText>ضع اعلانك هنا</AdText>
                            <Megaphone />
                        </AdBanner>
                    </Content>
                    <FooterBar />
                    <ToTop><DoubleUp /></ToTop>
                    <FloatButton $ring $left={2413} $top={743} $shadow="0 4px 8px rgba(0,0,0,.2)"><Mosque /></FloatButton>
                    <FloatButton $left={2413} $top={854} $shadow="0 6px 28px rgba(0,0,0,.45)"><Speaker /></FloatButton>
                    <FloatButton $left={2421} $top={959}><Messenger /></FloatButton>
                    <CursorMark><Cursor /></CursorMark>
                </Main>
                <ScrollTrack>
                    <Arrow $mt={7} />
                    <Thumb />
                    <Arrow $down $mt={210} />
                </ScrollTrack>
            </PageArea>

            <Taskbar>
                <Pinned>
                    {pins.map((icon, i) => (
                        <Pin key={i} $active={i === 3}>
                            {icon}
                            {i === 10 && <PinBadge>6</PinBadge>}
                        </Pin>
                    ))}
                </Pinned>
                <Tray>
                    <Thermo />
                    <Weather>أيام...</Weather>
                    <TraySlot $w={28} $ml={43}><ChevronUp size={24} color="#000" strokeWidth={1.5} /></TraySlot>
                    <TraySlot $w={28} $ml={12}><TrayMic /></TraySlot>
                    <TraySlot $w={28} $ml={15}><Network /></TraySlot>
                    <TraySlot $w={28} $ml={14}><TraySpeaker /></TraySlot>
                    <TrayText>ENG</TrayText>
                    <Clock>1:06 AM<br />06/20/2025</Clock>
                    <TraySlot $w={28} $ml={33}><Notification /></TraySlot>
                    <TraySlot $w={43} />
                </Tray>
            </Taskbar>
        </Screen>
    )
}
